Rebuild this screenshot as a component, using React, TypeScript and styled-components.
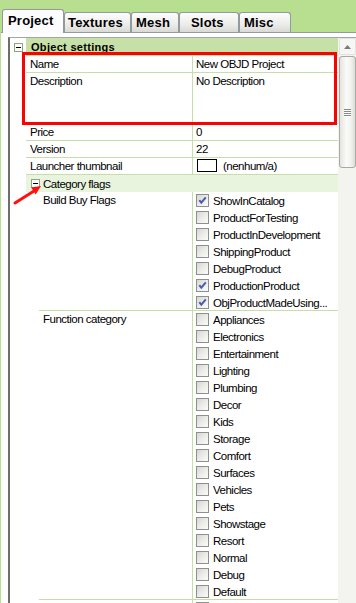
import React from 'react';
import styled, { createGlobalStyle } from 'styled-components';

const colors = {
  frame: '#b7df8f',
  tabBorder: '#919b9c',
  gridLine: '#c8dea8',
  header: '#c6e0a8',
  subHeader: '#e9f4de',
  red: '#ff0000',
};

const GlobalStyle = createGlobalStyle`
  html, body {
    margin: 0;
    padding: 0;
  }
  body {
    background: ${colors.frame};
    font-family: 'Liberation Sans', Arial, sans-serif;
  }
`;

const Window = styled.div`
  position: relative;
  width: 356px;
  height: 603px;
  overflow: hidden;
  background: ${colors.frame};
  display: flex;
  flex-direction: column;
  color: #000;
  font-size: 11.5px;
  letter-spacing: -0.5px;
`;

const TabStrip = styled.div`
  display: flex;
  align-items: flex-end;
  height: 32px;
  padding-left: 2px;
  flex: none;
`;

const Tab = styled.div<{ $active?: boolean; $w: number; $pad: number }>`
  box-sizing: border-box;
  width: ${p => p.$w}px;
  height: ${p => (p.$active ? 24 : 20)}px;
  margin-bottom: ${p => (p.$active ? -1 : 0)}px;
  padding-left: ${p => p.$pad}px;
  padding-bottom: ${p => (p.$active ? 3 : 0)}px;
  display: flex;
  align-items: center;
  font: bold 13px 'Liberation Sans', Arial, sans-serif;
  letter-spacing: 0.2px;
  border: 1px solid ${colors.tabBorder};
  border-bottom: none;
  border-radius: 3px 3px 0 0;
  background: ${p => (p.$active ? '#fcfcfe' : 'linear-gradient(#fdfdfd, #ececea 60%, #d9d9d5)')};
  position: relative;
  z-index: ${p => (p.$active ? 1 : 0)};
`;

const Panel = styled.div`
  flex: 1;
  min-height: 0;
  margin-left: 1px;
  background: #fff;
  border-top: 1px solid ${colors.tabBorder};
  padding: 4px 0 0 7px;
  display: flex;
`;

const Grid = styled.div`
  flex: 1;
  display: flex;
  border-left: 2px solid #6e6e6e;
  border-top: 1px solid #a5a5a5;
  min-height: 0;
`;

const GridBody = styled.div`
  flex: 1;
  min-width: 0;
  overflow: hidden;
  display: flex;
  flex-direction: column;
`;

const CategoryRow = styled.div<{ $h?: number }>`
  display: grid;
  grid-template-columns: 16px minmax(0, 1fr);
  height: ${p => p.$h ?? 17}px;
  flex: none;
`;

const CategoryGutter = styled.div`
  display: flex;
  align-items: center;
  justify-content: center;
`;

const CategoryBand = styled.div<{ $top?: boolean }>`
  display: flex;
  align-items: center;
  gap: 3px;
  padding-left: 5px;
  background: ${p => (p.$top ? colors.header : colors.subHeader)};
  font-weight: ${p => (p.$top ? 700 : 400)};
  font-size: ${p => (p.$top ? '11px' : 'inherit')};
  letter-spacing: ${p => (p.$top ? '0.3px' : 'inherit')};
  white-space: nowrap;
`;

const ExpandBox = styled.span`
  box-sizing: border-box;
  width: 9px;
  height: 9px;
  border: 1px solid #8ea47a;
  background: #fff;
  position: relative;
  flex: none;
  &::after {
    content: '';
    position: absolute;
    left: 1px;
    right: 1px;
    top: 3px;
    height: 1px;
    background: #000;
  }
`;

const PropRow = styled.div<{ $level: number }>`
  display: grid;
  grid-template-columns: ${p => 16 + p.$level * 13}px ${p => 166 - p.$level * 13}px minmax(0, 1fr);
  flex: none;
`;

const Gutter = styled.div``;

const LabelCell = styled.div<{ $h?: number }>`
  min-height: ${p => p.$h ?? 16}px;
  line-height: 16px;
  padding-left: 4px;
  border-bottom: 1px solid ${colors.gridLine};
  white-space: nowrap;
  overflow: hidden;
`;

const ValueCell = styled(LabelCell)`
  border-left: 1px solid ${colors.gridLine};
  padding-left: 3px;
`;

const Swatch = styled.span`
  display: inline-block;
  box-sizing: border-box;
  width: 20px;
  height: 13px;
  margin: 1px 6px 0 1px;
  border: 1px solid #000;
  background: #fff;
  vertical-align: top;
`;

const CheckList = styled.div`
  margin-bottom: -1px;
`;

const CheckItem = styled.div`
  height: 17px;
  display: flex;
  align-items: center;
  gap: 4px;
  white-space: nowrap;
`;

const Box = styled.span`
  box-sizing: border-box;
  width: 13px;
  height: 13px;
  flex: none;
  border: 1px solid #8e8f8f;
  background: linear-gradient(135deg, #d6d6d2, #ededea 55%, #fbfbfa);
  display: flex;
  align-items: center;
  justify-content: center;
`;

const ScrollBar = styled.div`
  width: 18px;
  flex: none;
  background: #f3f3ef;
  display: flex;
  flex-direction: column;
  align-items: center;
`;

const ScrollButton = styled.div`
  box-sizing: border-box;
  width: 17px;
  height: 17px;
  border: 1px solid #e2e2de;
  border-radius: 2px;
  background: #f6f6f4;
  display: flex;
  align-items: center;
  justify-content: center;
`;

const Thumb = styled.div`
  box-sizing: border-box;
  width: 17px;
  height: 112px;
  margin-top: 1px;
  border: 1px solid #a9a9a3;
  border-radius: 3px;
  background: linear-gradient(90deg, #e4e4e0, #fbfbfa 45%, #f0f0ec 75%, #dcdcd8);
  display: flex;
  flex-direction: column;
  align-items: center;
  justify-content: center;
  gap: 1px;
`;

const Grip = styled.span`
  width: 7px;
  height: 1px;
  background: #8a8a86;
  box-shadow: 0 1px 0 #fff;
`;

const Highlight = styled.div`
  position: absolute;
  left: 22px;
  top: 52px;
  width: 315px;
  height: 73px;
  box-sizing: border-box;
  border: 3px solid ${colors.red};
  pointer-events: none;
`;

const ArrowSvg = styled.svg`
  position: absolute;
  left: 0;
  top: 0;
  pointer-events: none;
`;

const Check = ({ on }: { on: boolean }) => (
  <Box>
    {on && (
      <svg width="11" height="11" viewBox="0 0 11 11">
        <path d="M2.3 5.2 L4.3 7.6 L8.8 2.4" fill="none" stroke="#4a5bb0" strokeWidth="2" />
      </svg>
    )}
  </Box>
);

const buildBuy: Array<[string, boolean]> = [
  ['ShowInCatalog', true],
  ['ProductForTesting', false],
  ['ProductInDevelopment', false],
  ['ShippingProduct', false],
  ['DebugProduct', false],
  ['ProductionProduct', true],
  ['ObjProductMadeUsing...', true],
];

const functionCategory = [
  'Appliances', 'Electronics', 'Entertainment', 'Lighting', 'Plumbing', 'Decor',
  'Kids', 'Storage', 'Comfort', 'Surfaces', 'Vehicles', 'Pets', 'Showstage',
  'Resort', 'Normal', 'Debug', 'Default',
];

const tabs = [
  { name: 'Project', w: 62, pad: 5, active: true },
  { name: 'Textures', w: 67, pad: 3 },
  { name: 'Mesh', w: 48, pad: 4 },
  { name: 'Slots', w: 60, pad: 11 },
  { name: 'Misc', w: 52, pad: 4 },
];

const Flags = ({ label, items }: { label: string; items: Array<[string, boolean]> }) => (
  <PropRow $level={1}>
    <Gutter />
    <LabelCell>{label}</LabelCell>
    <ValueCell>
      <CheckList>
        {items.map(([name, on]) => (
          <CheckItem key={name}>
            <Check on={on} />
            {name}
          </CheckItem>
        ))}
      </CheckList>
    </ValueCell>
  </PropRow>
);

export default function App() {
  return (
    <>
      <GlobalStyle />
      <Window>
        <TabStrip>
          {tabs.map(t => (
            <Tab key={t.name} $active={t.active} $w={t.w} $pad={t.pad}>
              {t.name}
            </Tab>
          ))}
        </TabStrip>
        <Panel>
          <Grid>
            <GridBody>
              <CategoryRow $h={18}>
                <CategoryGutter>
                  <ExpandBox />
                </CategoryGutter>
                <CategoryBand $top>Object settings</CategoryBand>
              </CategoryRow>

              <PropRow $level={0}>
                <Gutter />
                <LabelCell>Name</LabelCell>
                <ValueCell>New OBJD Project</ValueCell>
              </PropRow>
              <PropRow $level={0}>
                <Gutter />
                <LabelCell $h={50}>Description</LabelCell>
                <ValueCell $h={50}>No Description</ValueCell>
              </PropRow>
              <PropRow $level={0}>
                <Gutter />
                <LabelCell>Price</LabelCell>
                <ValueCell>0</ValueCell>
              </PropRow>
              <PropRow $level={0}>
                <Gutter />
                <LabelCell>Version</LabelCell>
                <ValueCell>22</ValueCell>
              </PropRow>
              <PropRow $level={0}>
                <Gutter />
                <LabelCell>Launcher thumbnail</LabelCell>
                <ValueCell>
                  <Swatch />
                  (nenhum/a)
                </ValueCell>
              </PropRow>

              <CategoryRow>
                <Gutter />
                <CategoryBand>
                  <ExpandBox />
                  Category flags
                </CategoryBand>
              </CategoryRow>

              <Flags label="Build Buy Flags" items={buildBuy} />
              <Flags label="Function category" items={functionCategory.map(n => [n, false] as [string, boolean])} />

              {/* next property, scrolled out of view except its first checkbox */}
              <PropRow $level={1}>
                <Gutter />
                <LabelCell />
                <ValueCell>
                  <CheckItem>
                    <Check on={false} />
                  </CheckItem>
                </ValueCell>
              </PropRow>
            </GridBody>
            <ScrollBar>
              <ScrollButton>
                <svg width="7" height="4" viewBox="0 0 7 4">
                  <path d="M0 4 L3.5 0 L7 4 Z" fill="#7a7a76" />
                </svg>
              </ScrollButton>
              <Thumb>
                <Grip />
                <Grip />
                <Grip />
                <Grip />
              </Thumb>
            </ScrollBar>
          </Grid>
        </Panel>

        <Highlight />
        <ArrowSvg width="60" height="220" viewBox="0 0 60 220">
          <line x1="15" y1="203" x2="34" y2="191" stroke="#ff1010" strokeWidth="3" strokeLinecap="round" />
          <path d="M41 186 L35.7 194.4 L31.2 187.5 Z" fill="#ff1010" />
        </ArrowSvg>
      </Window>
    </>
  );
}
